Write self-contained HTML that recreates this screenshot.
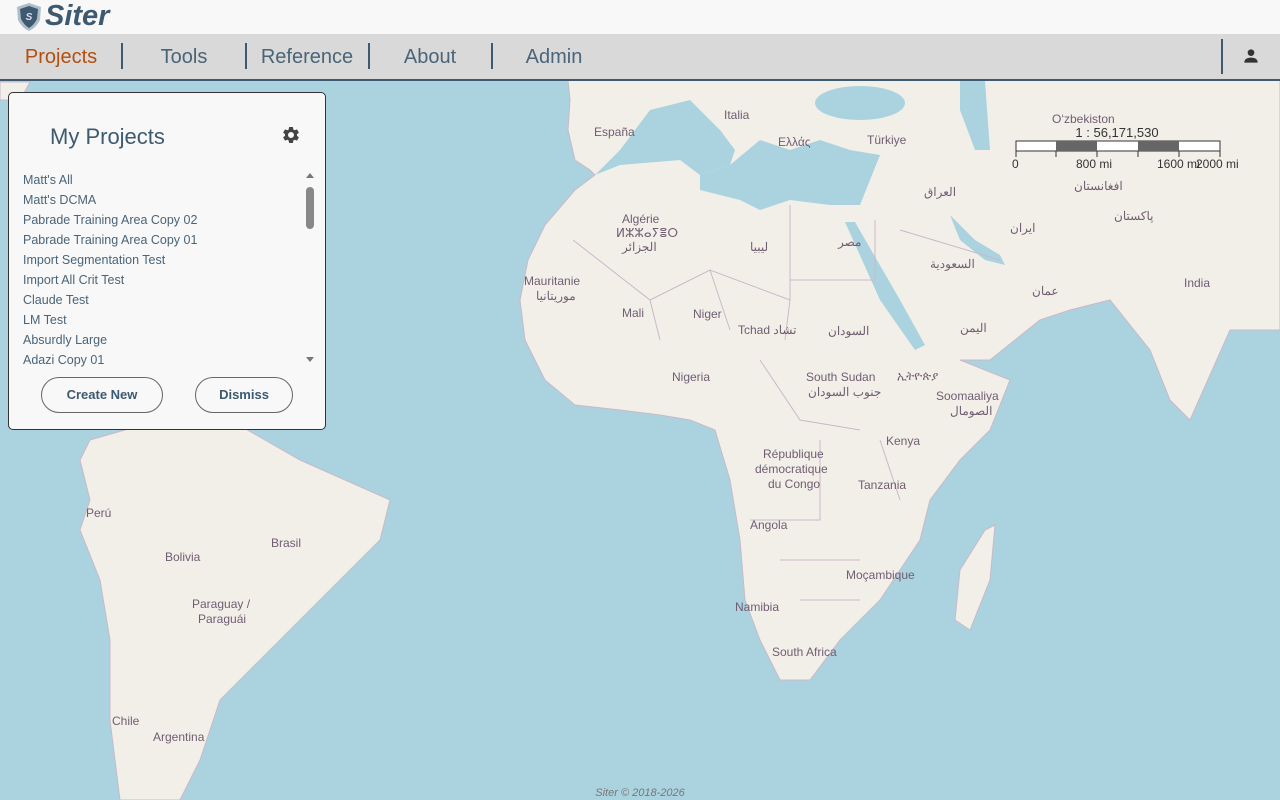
<!DOCTYPE html>
<html><head><meta charset="utf-8"><style>
*{margin:0;padding:0;box-sizing:border-box}
body{width:1280px;height:800px;overflow:hidden;position:relative;font-family:"Liberation Sans","Noto Sans CJK SC",sans-serif;background:#aad3df}
#hdr{position:absolute;left:0;top:0;width:1280px;height:34px;background:#f8f8f8}
#nav{position:absolute;left:0;top:34px;width:1280px;height:47px;background:#d9d9d9;border-bottom:2px solid #3d5a70}
.ni{position:absolute;top:12px;font-size:20px;color:#4a6478;transform:translateX(-50%)}
.sep{position:absolute;top:9px;width:2px;height:26px;background:#3d5a70}
#map{position:absolute;left:0;top:81px}
.lb{font-size:12px;fill:#705d72;font-family:"Liberation Sans","Noto Sans CJK SC",sans-serif}
#panel{position:absolute;left:8px;top:92px;width:318px;height:338px;background:#f8f8f8;border:1px solid #333;border-radius:5px}
#panel h2{position:absolute;left:41px;top:31px;font-weight:normal;font-size:22px;color:#3d5a70}
.li{position:absolute;left:14px;font-size:12.5px;color:#4a6478}
.btn{position:absolute;top:284px;height:36px;border:1px solid #666;border-radius:18px;font-size:13px;color:#3d5a70;text-align:center;line-height:34px;font-weight:bold}
</style></head><body>
<svg id="map" width="1280" height="719" viewBox="0 81 1280 719">
<rect x="0" y="81" width="1280" height="719" fill="#aad3df"/>
<g fill="#f2efe9" stroke="#c9b9c9" stroke-width="1">
<polygon points="568,80 1280,80 1280,330 1230,330 1190,420 1170,400 1150,350 1110,300 1070,310 1040,320 990,360 960,360 1010,380 990,430 960,460 930,500 920,540 880,600 840,640 810,680 780,680 760,640 745,600 740,540 730,480 715,430 690,420 660,415 620,410 575,405 545,380 525,340 520,300 528,260 545,225 575,190 595,175 590,170 575,160 568,130 570,100"/>
<polygon points="90,440 160,420 230,420 300,460 390,500 380,540 340,580 300,620 260,660 220,700 200,760 180,800 120,800 110,720 110,640 100,580 80,530 90,500 80,460"/>
<polygon points="985,530 995,525 990,580 970,630 955,620 960,570"/>
<polygon points="0,82 30,82 20,100 0,100"/>
</g>
<g fill="#aad3df">
<polygon points="595,175 620,150 650,110 690,100 720,130 735,150 730,165 700,175 680,160 620,165"/>
<polygon points="730,165 760,140 790,150 820,140 850,150 880,155 870,180 860,205 830,205 790,200 760,210 740,200 700,190 700,175"/>
<ellipse cx="860" cy="103" rx="45" ry="17"/>
<polygon points="960,81 985,81 990,150 975,150 960,110"/>
<polygon points="845,222 855,222 900,300 925,345 915,350 880,300"/>
<polygon points="950,215 975,240 1000,255 1005,265 985,260 960,240"/>
</g>
<g fill="none" stroke="#c9b9c9" stroke-width="1">
<path d="M573,240 L650,300 L710,270 L790,300 L790,205 M790,280 L875,280 L875,220 M650,300 L660,340 M710,270 L730,330 M790,300 L785,340 M760,360 L800,420 L860,430 M820,440 L820,520 L750,520 M880,440 L900,500 M780,560 L860,560 M800,600 L860,600 M900,230 L1000,260"/>
</g>
<g class="lb">
<text x="594" y="136">España</text><text x="724" y="119">Italia</text><text x="778" y="146">Ελλάς</text><text x="867" y="144">Türkiye</text>
<text x="1052" y="123">O‘zbekiston</text><text x="924" y="196">العراق</text><text x="1074" y="190">افغانستان</text><text x="1010" y="232">ایران</text><text x="1114" y="220">پاکستان</text>
<text x="622" y="223">Algérie</text><text x="616" y="237">ⵍⵣⵣⴰⵢⴻⵔ</text><text x="622" y="251">الجزائر</text><text x="750" y="251">ليبيا</text><text x="838" y="246">مصر</text><text x="930" y="268">السعودية</text><text x="1184" y="287">India</text><text x="1032" y="295">عمان</text><text x="960" y="332">اليمن</text>
<text x="524" y="285">Mauritanie</text><text x="536" y="300">موريتانيا</text><text x="622" y="317">Mali</text><text x="693" y="318">Niger</text><text x="738" y="334">Tchad تشاد</text><text x="828" y="335">السودان</text>
<text x="672" y="381">Nigeria</text><text x="806" y="381">South Sudan</text><text x="808" y="396">جنوب السودان</text><text x="897" y="380">ኢትዮጵያ</text><text x="936" y="400">Soomaaliya</text><text x="950" y="415">الصومال</text>
<text x="886" y="445">Kenya</text><text x="763" y="458">République</text><text x="755" y="473">démocratique</text><text x="768" y="488">du Congo</text><text x="858" y="489">Tanzania</text>
<text x="750" y="529">Angola</text><text x="846" y="579">Moçambique</text><text x="735" y="611">Namibia</text><text x="772" y="656">South Africa</text>
<text x="86" y="517">Perú</text><text x="271" y="547">Brasil</text><text x="165" y="561">Bolivia</text><text x="192" y="608">Paraguay /</text><text x="198" y="623">Paraguái</text><text x="112" y="725">Chile</text><text x="153" y="741">Argentina</text>
</g>
<text x="1117" y="137" text-anchor="middle" font-size="13" fill="#333" font-family="Liberation Sans">1 : 56,171,530</text>
<rect x="1016" y="141" width="204" height="10" fill="#fff" stroke="#333"/>
<rect x="1056" y="141" width="41" height="10" fill="#666"/><rect x="1138" y="141" width="41" height="10" fill="#666"/>
<g stroke="#333"><line x1="1016" y1="151" x2="1016" y2="157"/><line x1="1056" y1="151" x2="1056" y2="157"/><line x1="1097" y1="151" x2="1097" y2="157"/><line x1="1138" y1="151" x2="1138" y2="157"/><line x1="1179" y1="151" x2="1179" y2="157"/><line x1="1220" y1="151" x2="1220" y2="157"/></g>
<g font-size="12" fill="#333" font-family="Liberation Sans"><text x="1012" y="168">0</text><text x="1076" y="168">800 mi</text><text x="1157" y="168">1600 mi</text><text x="1196" y="168">2000 mi</text></g>
<text x="640" y="796" text-anchor="middle" font-size="11" font-style="italic" fill="#777" font-family="Liberation Sans">Siter © 2018-2026</text>
</svg>
<div id="hdr">
<svg style="position:absolute;left:16px;top:2px" width="26" height="30" viewBox="0 0 26 30"><path d="M13 1 L25 5 L24 18 Q20 26 13 29 Q6 26 2 18 L1 5 Z" fill="#aebdc9"/><path d="M13 4 L22 7 L21 17 Q18 23 13 26 Q8 23 5 17 L4 7 Z" fill="#3d5a70"/><text x="13" y="18" font-size="10" fill="#dde" text-anchor="middle" font-weight="bold" font-style="italic">S</text></svg>
<div style="position:absolute;left:45px;top:0px;font-size:29px;font-weight:bold;font-style:italic;color:#3d5a70">Siter</div>
</div>
<div id="nav">
<div class="ni" style="left:61px;color:#b3500f">Projects</div><div class="sep" style="left:121px"></div>
<div class="ni" style="left:184px">Tools</div><div class="sep" style="left:245px"></div>
<div class="ni" style="left:307px">Reference</div><div class="sep" style="left:368px"></div>
<div class="ni" style="left:430px">About</div><div class="sep" style="left:491px"></div>
<div class="ni" style="left:554px">Admin</div>
<div class="sep" style="left:1221px;top:5px;height:35px"></div>
<svg style="position:absolute;left:1241px;top:12px" width="20" height="20" viewBox="0 0 24 24"><circle cx="12" cy="8" r="4" fill="#333"/><path d="M4 20 Q4 14 12 14 Q20 14 20 20 Z" fill="#333"/></svg>
</div>
<div id="panel">
<h2>My Projects</h2>
<svg style="position:absolute;left:272px;top:32px" width="20" height="20" viewBox="0 0 24 24"><path fill="#444" d="M19.14 12.94c.04-.3.06-.61.06-.94 0-.32-.02-.64-.07-.94l2.030-1.58a.49.49 0 0 0 .12-.61l-1.92-3.32a.49.49 0 0 0-.59-.22l-2.39.96c-.5-.38-1.03-.7-1.62-.94l-.36-2.54a.48.48 0 0 0-.48-.41h-3.84c-.24 0-.43.17-.47.41l-.36 2.54c-.59.24-1.13.57-1.62.94l-2.39-.96a.48.48 0 0 0-.59.22L2.74 8.87c-.12.21-.08.47.12.61l2.03 1.58c-.05.3-.09.63-.09.94s.02.64.07.94l-2.03 1.58a.49.49 0 0 0-.12.61l1.92 3.32c.12.22.37.29.59.22l2.39-.96c.5.38 1.03.7 1.62.94l.36 2.54c.05.24.24.41.48.41h3.840c.24 0 .44-.17.47-.41l.36-2.54c.59-.24 1.13-.56 1.62-.94l2.39.96c.22.08.47 0 .59-.22l1.92-3.32c.12-.22.07-.47-.12-.61l-2.01-1.58zM12 15.6A3.6 3.6 0 1 1 12 8.4a3.6 3.6 0 0 1 0 7.2z"/></svg>
<div class="li" style="top:80px">Matt's All</div><div class="li" style="top:100px">Matt's DCMA</div><div class="li" style="top:120px">Pabrade Training Area Copy 02</div><div class="li" style="top:140px">Pabrade Training Area Copy 01</div><div class="li" style="top:160px">Import Segmentation Test</div><div class="li" style="top:180px">Import All Crit Test</div><div class="li" style="top:200px">Claude Test</div><div class="li" style="top:220px">LM Test</div><div class="li" style="top:240px">Absurdly Large</div><div class="li" style="top:260px">Adazi Copy 01</div>
<div style="position:absolute;left:297px;top:80px;width:0;height:0;border-left:4px solid transparent;border-right:4px solid transparent;border-bottom:5px solid #777"></div>
<div style="position:absolute;left:297px;top:94px;width:8px;height:42px;border-radius:4px;background:#888"></div>
<div style="position:absolute;left:297px;top:264px;width:0;height:0;border-left:4px solid transparent;border-right:4px solid transparent;border-top:5px solid #777"></div>
<div class="btn" style="left:32px;width:122px">Create New</div>
<div class="btn" style="left:186px;width:98px">Dismiss</div>
</div>
</body></html>
